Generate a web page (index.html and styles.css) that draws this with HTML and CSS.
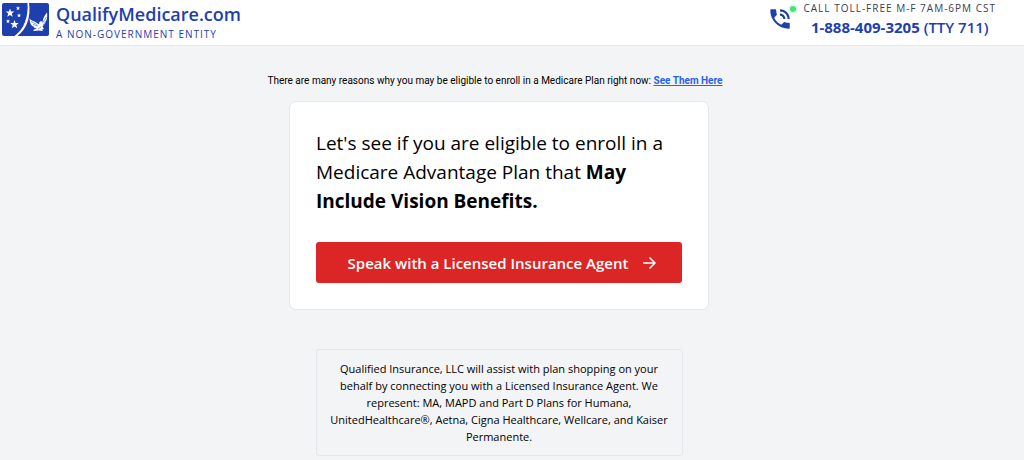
FILE: index.html
```html
<!DOCTYPE html>
<html lang="en">
<head>
  <meta charset="UTF-8" />
  <meta name="viewport" content="width=device-width, initial-scale=1.0"/>
  <title>QualifyMedicare.com</title>
  <link rel="stylesheet" href="styles.css">
</head>
<body>

  <header class="header">
    <a href="#" class="brand">
      <svg class="logo" viewBox="0 0 47 33" aria-hidden="true">
        <rect width="47" height="33" rx="2" fill="#1e40af"/>
        <path d="M25.500 0h1.500C29 13 25 26 15.500 33h-3C22.500 26 26.500 13 25.500 0z" fill="#fff"/>
        <g fill="#fff">
          <path id="star" d="M8 5.500l1.100 3 3.200.1-2.500 2 .9 3.100L8 11.900l-2.700 1.800.9-3.100-2.500-2 3.200-.1z"/>
          <use href="#star" transform="translate(4.500 11.500)"/>
          <use href="#star" transform="translate(12 .3) scale(.5)"/>
          <use href="#star" transform="translate(13 7.500) scale(.5)"/>
          <use href="#star" transform="translate(2 13.300) scale(.5)"/>
          <!-- eagle -->
          <path d="M27.500 15.500c2 2.500 5 2.500 7.500 4.500l2 1.500.5-2.500 1.500-1 1.500 1c.5-3 1.500-6 4.500-9.500.8 5.500-.5 10-4.500 14l1.500 2.500-2 .5 1 1.500-4.500-.5-4.500.5-1-1 4-1.500c-2 0-3-.8-3.500-2-2-.5-3.500-2.500-4-8z"/>
        </g>
        <path d="M29 18.500l6 3M31 21.500l5 1.500M40.500 20l4-6M41 22l3-4M36 26l3-2" stroke="#1e40af" stroke-width=".5" fill="none"/>
      </svg>
      <span class="brand-text">
        <span class="brand-name">QualifyMedicare.com</span>
        <span class="brand-tag">A NON-GOVERNMENT ENTITY</span>
      </span>
    </a>

    <div class="call">
      <div class="call-icon">
        <svg viewBox="0 0 24 24" fill="#1e40af" aria-hidden="true">
          <path d="M20 15.500c-1.250 0-2.450-.2-3.570-.57-.35-.11-.74-.03-1.020.24l-2.200 2.200c-2.830-1.440-5.150-3.750-6.590-6.590l2.200-2.210c.28-.26.36-.65.25-1C8.700 6.450 8.500 5.250 8.500 4c0-.55-.45-1-1-1H4c-.55 0-1 .45-1 1 0 9.390 7.610 17 17 17 .55 0 1-.45 1-1v-3.500c0-.55-.45-1-1-1zM19 12h2c0-4.970-4.030-9-9-9v2c3.870 0 7 3.130 7 7zm-4 0h2c0-2.760-2.240-5-5-5v2c1.660 0 3 1.340 3 3z"/>
        </svg>
        <span class="status-dot"></span>
      </div>
      <div class="call-text">
        <span class="call-hours">CALL TOLL-FREE M-F 7AM-6PM CST</span>
        <a href="tel:18884093205" class="call-number">1-888-409-3205 <span>(TTY 711)</span></a>
      </div>
    </div>
  </header>

  <main class="main">
    <p class="notice">There are many reasons why you may be eligible to enroll in a Medicare Plan right now: <a href="#">See Them Here</a></p>

    <section class="card">
      <p class="question">Let's see if you are eligible to enroll in a Medicare Advantage Plan that <strong>May Include Vision Benefits.</strong></p>
      <button type="button" class="agent-btn">
        Speak with a Licensed Insurance Agent
        <svg viewBox="0 0 14 14" aria-hidden="true">
          <path d="M1 7h12M7.500 1.500L13 7l-5.500 5.500" fill="none" stroke="#fff" stroke-width="1.500"/>
        </svg>
      </button>
    </section>

    <p class="disclaimer">Qualified Insurance, LLC will assist with plan shopping on your behalf by connecting you with a Licensed Insurance Agent. We represent: MA, MAPD and Part D Plans for Humana, UnitedHealthcare®, Aetna, Cigna Healthcare, Wellcare, and Kaiser Permanente.</p>
  </main>

</body>
</html>
```
FILE: styles.css
```css
* {
  box-sizing: border-box;
}
body {
  margin: 0;
  background-color: #f3f4f6;
  color: #000;
  font-family: "Open Sans", "Noto Sans", sans-serif;
}
.header {
  display: flex;
  justify-content: space-between;
  align-items: flex-start;
  padding: 2px 28px 3px 2px;
  background: #fff;
  border-bottom: 1px solid #e5e7eb;
}
.brand {
  display: flex;
  gap: 7px;
  color: #1e40af;
  text-decoration: none;
}
.logo {
  width: 47px;
  height: 33px;
  margin-top: 1px;
}
.brand-text {
  display: flex;
  flex-direction: column;
}
.brand-name {
  font-size: 18px;
  line-height: 24px;
  font-weight: 600;
}
.brand-tag {
  font-size: 10px;
  line-height: 16px;
  font-weight: 500;
  letter-spacing: 1px;
}
.call {
  display: flex;
  gap: 11px;
}
.call-icon {
  position: relative;
  width: 26px;
  height: 26px;
  margin-top: 4px;
}
.call-icon svg {
  display: block;
}
.status-dot {
  position: absolute;
  top: 0;
  right: -3px;
  width: 6px;
  height: 6px;
  border-radius: 50%;
  background: #4ade80;
  box-shadow: 0 0 0 2px #dcfce7;
}
.call-text {
  display: flex;
  flex-direction: column;
  align-items: center;
}
.call-hours {
  color: #374151;
  font-size: 10px;
  line-height: 12px;
  font-weight: 500;
  letter-spacing: 1px;
}
.call-number {
  color: #1e40af;
  font-size: 15px;
  line-height: 26px;
  font-weight: 700;
  text-decoration: none;
}
.call-number span {
  font-weight: 600;
}
.main {
  display: flex;
  flex-direction: column;
  align-items: center;
  padding: 27px 26px 4px 0;
}
.notice {
  margin: 0 8px 12px 0;
  font-family: Roboto, "Open Sans", sans-serif;
  font-size: 10px;
  line-height: 16px;
}
.notice a {
  color: #2563eb;
  font-weight: 700;
}
.card {
  width: 100%;
  max-width: 420px;
  padding: 27px 26px 26px;
  background: #fff;
  border: 1px solid #e5e7eb;
  border-radius: 7px;
}
.question {
  margin: 0 0 26px;
  font-size: 19px;
  line-height: 29px;
}
.agent-btn {
  display: flex;
  justify-content: center;
  align-items: center;
  gap: 14px;
  width: 100%;
  height: 41px;
  padding: 0 6px 0 12px;
  border: none;
  border-radius: 3px;
  background: #dc2626;
  color: #fff;
  font-family: inherit;
  font-size: 15px;
  font-weight: 600;
  cursor: pointer;
}
.agent-btn:hover {
  background: #b91c1c;
}
.agent-btn svg {
  width: 14px;
  height: 14px;
}
.disclaimer {
  width: 100%;
  max-width: 367px;
  margin: 39px 0 0;
  padding: 10px 11px;
  border: 1px solid #e5e7eb;
  border-radius: 3px;
  font-size: 11px;
  line-height: 17px;
  text-align: center;
}
```
